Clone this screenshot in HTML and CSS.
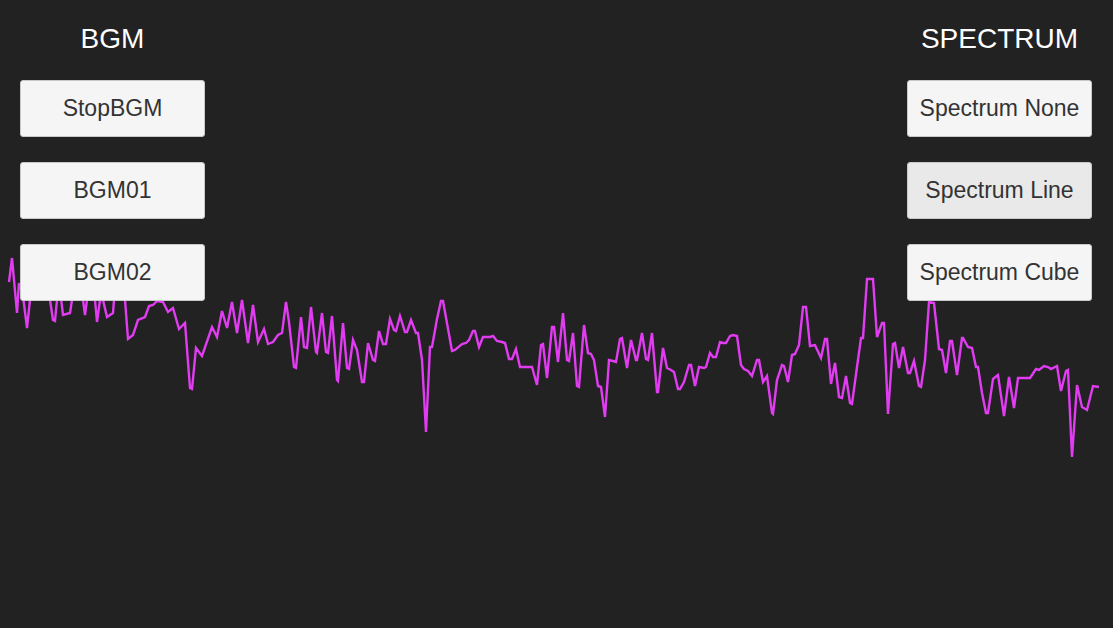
FILE: index.html
```html
<!DOCTYPE html>
<html lang="en">

<head>
    <meta charset="UTF-8">
    <meta name="viewport" content="width=device-width, initial-scale=1.0">
    <title>Audio Spectrum</title>
    <link rel="stylesheet" href="styles.css">
</head>

<body>
    <div class="stage">
        <!-- spectrum line, drawn under the controls -->
        <svg class="spectrum" width="1113" height="628" viewBox="0 0 1113 628">
            <polyline class="spectrum-line" points="9,282 12,258 17,313 19,283 23,296 27,328 30,300 33,285 37,295 40,280 43,292 47,285 50,300 53,320 55,321 57,300 60,290 63,315 70,313 72,300 75,288 79,295 83,300 85,315 87,300 90,290 93,296 95,300 97,322 100,300 103,300 107,317 113,313 114,300 117,290 121,295 125,300 128,339 133,335 138,320 145,317 149,306 153,305 157,301 163,302 168,312 173,308 179,329 185,323 190,388 192,389 196,348 202,356 212,327 217,337 222,311 227,328 232,302 237,333 242,300 248,343 253,305 258,342 264,329 268,344 273,342 278,335 282,333 286,302 289,322 294,367 296,368 301,317 304,347 307,348 311,307 316,352 317,353 322,313 326,352 328,353 332,316 337,380 338,381 343,323 347,368 349,369 353,340 357,350 362,382 364,382 368,343 373,360 375,361 379,331 383,344 386,344 390,319 394,330 396,331 400,316 405,332 407,332 411,320 416,333 418,333 422,360 426,432 430,347 432,347 437,319 441,301 443,301 452,351 455,350 462,344 466,343 469,340 473,331 475,331 479,347 483,337 490,337 493,336 497,341 502,342 505,343 509,359 512,359 516,349 520,367 532,367 537,385 541,345 543,344 547,378 552,327 554,327 558,362 563,313 567,360 569,361 573,333 577,386 579,387 584,325 588,353 591,354 594,360 598,386 601,387 605,417 609,360 613,361 616,362 620,339 622,338 627,368 631,340 636,360 637,360 642,333 646,359 648,360 652,333 657,392 658,392 663,348 667,368 671,370 674,372 678,389 680,389 684,382 689,365 691,365 695,386 699,367 704,368 706,367 710,353 713,357 716,357 720,342 723,343 726,343 730,336 733,335 737,336 741,365 744,369 748,371 752,376 757,360 759,360 763,382 767,376 772,413 773,414 777,380 782,365 784,366 788,382 792,355 795,354 799,345 803,307 806,307 810,346 815,345 821,358 825,339 827,339 831,384 835,363 839,397 842,398 846,376 850,403 852,404 857,367 861,338 863,338 867,279 873,279 877,337 882,323 884,323 888,414 893,344 895,343 899,368 903,347 908,373 910,373 914,361 919,386 921,387 925,360 929,302 934,303 939,349 942,350 946,373 950,341 952,341 957,375 962,338 963,338 968,347 972,348 976,367 978,367 982,393 986,413 988,413 993,379 998,375 1004,416 1009,377 1014,408 1018,378 1030,378 1036,369 1039,370 1044,366 1048,367 1051,369 1057,366 1061,391 1066,371 1068,370 1072,457 1077,385 1082,407 1087,410 1093,386 1099,387" />
        </svg>

        <div class="panels">
            <div class="panel">
                <h2 class="panel-title">BGM</h2>
                <button class="ui-button">StopBGM</button>
                <button class="ui-button">BGM01</button>
                <button class="ui-button">BGM02</button>
            </div>

            <div class="panel">
                <h2 class="panel-title">SPECTRUM</h2>
                <button class="ui-button">Spectrum None</button>
                <button class="ui-button ui-button-active">Spectrum Line</button>
                <button class="ui-button">Spectrum Cube</button>
            </div>
        </div>
    </div>
</body>

</html>
```

FILE: styles.css
```css
html,
body {
    margin: 0;
    padding: 0;
    background-color: #222222;
}

body {
    font-family: "Liberation Sans", Arial, sans-serif;
    width: 1113px;
    height: 628px;
    overflow: hidden;
}

.stage {
    display: grid;
    width: 1113px;
    height: 628px;
}

.spectrum,
.panels {
    grid-area: 1 / 1;
}

.spectrum {
    display: block;
}

.spectrum-line {
    fill: none;
    stroke: #e23cf2;
    stroke-width: 2.4;
    stroke-linejoin: miter;
}

.panels {
    display: flex;
    justify-content: space-between;
    align-items: flex-start;
    padding: 23px 21px 0 20px;
    z-index: 1;
}

.panel {
    width: 185px;
    display: flex;
    flex-direction: column;
    gap: 25px;
}

.panel-title {
    margin: 0;
    font-size: 28px;
    font-weight: normal;
    line-height: 32px;
    color: #ffffff;
    text-align: center;
}

.ui-button {
    height: 57px;
    padding: 0;
    font-family: "Liberation Sans", Arial, sans-serif;
    font-size: 23px;
    color: #333333;
    background-color: #f5f5f5;
    border: 1px solid #c9c9c9;
    border-radius: 3px;
    cursor: pointer;
}

.ui-button-active {
    background-color: #e9e9e9;
}
```
